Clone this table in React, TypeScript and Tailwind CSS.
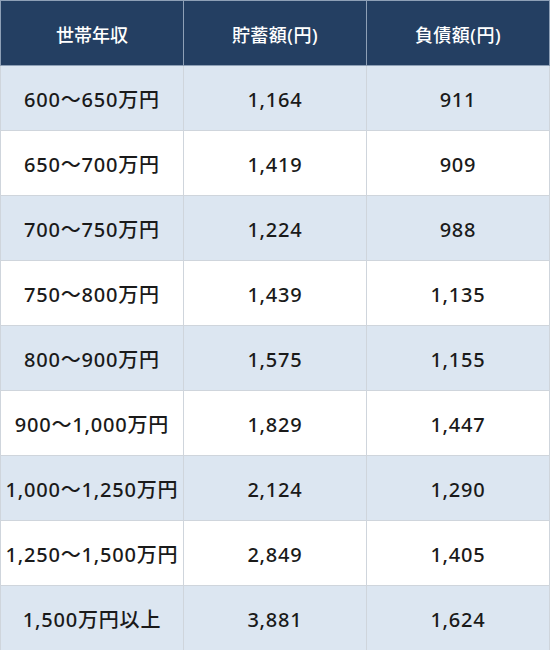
const rows = [
  ["600～650万円", "1,164", "911"],
  ["650～700万円", "1,419", "909"],
  ["700～750万円", "1,224", "988"],
  ["750～800万円", "1,439", "1,135"],
  ["800～900万円", "1,575", "1,155"],
  ["900～1,000万円", "1,829", "1,447"],
  ["1,000～1,250万円", "2,124", "1,290"],
  ["1,250～1,500万円", "2,849", "1,405"],
  ["1,500万円以上", "3,881", "1,624"],
];

export default function App() {
  return (
    <div className="w-[550px] h-[650px] bg-white font-['Noto_Sans','Noto_Sans_CJK_JP',sans-serif]">
      <table className="w-full border-collapse table-fixed">
        <thead>
          <tr className="h-[65px] bg-[#243f62] text-white">
            <th className="border border-[#8ea0b6] pt-1 text-[18px] font-medium">世帯年収</th>
            <th className="border border-[#8ea0b6] pt-1 text-[18px] font-medium tracking-[0.5px]">貯蓄額(円)</th>
            <th className="border border-[#8ea0b6] pt-1 text-[18px] font-medium tracking-[0.5px]">負債額(円)</th>
          </tr>
        </thead>
        <tbody>
          {rows.map((r, i) => (
            <tr key={i} className={i % 2 === 0 ? "h-[65px] bg-[#dce6f1]" : "h-[65px] bg-white"}>
              {r.map((c, j) => (
                <td key={j} className="border border-[#cfd5dc] pt-1 text-center text-[20px] font-medium tracking-[0.8px] text-[#1a1a1a]">
                  {c}
                </td>
              ))}
            </tr>
          ))}
        </tbody>
      </table>
    </div>
  );
}
